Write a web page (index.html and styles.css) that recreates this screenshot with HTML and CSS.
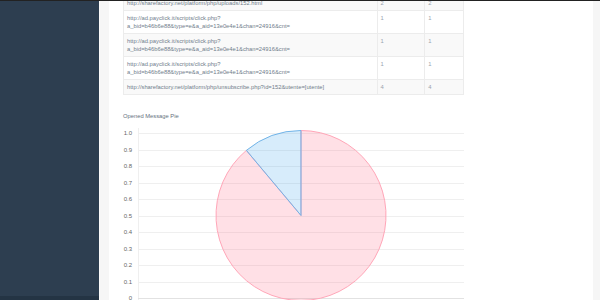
FILE: index.html
```html
<!DOCTYPE html>
<html>
<head>
<meta charset="utf-8">
<link rel="stylesheet" href="styles.css">
</head>
<body>
<div class="topbar"></div>
<div class="layout">
  <aside class="sidebar">
    <div class="sidebar-fill"></div>
    <div class="sidebar-foot"></div>
  </aside>
  <main class="main">
    <div class="panel">
      <table class="links">
        <colgroup><col class="c1"><col class="c2"><col class="c3"></colgroup>
        <tr><td>http://sharefactory.net/platform/php/uploads/152.html</td><td>2</td><td>2</td></tr>
        <tr><td>http://ad.payclick.it/scripts/click.php?<br>a_bid=b46b6e88&amp;type=e&amp;a_aid=13e0e4e1&amp;chan=24916&amp;cnt=</td><td>1</td><td>1</td></tr>
        <tr><td>http://ad.payclick.it/scripts/click.php?<br>a_bid=b46b6e88&amp;type=e&amp;a_aid=13e0e4e1&amp;chan=24916&amp;cnt=</td><td>1</td><td>1</td></tr>
        <tr><td>http://ad.payclick.it/scripts/click.php?<br>a_bid=b46b6e88&amp;type=e&amp;a_aid=13e0e4e1&amp;chan=24916&amp;cnt=</td><td>1</td><td>1</td></tr>
        <tr><td>http://sharefactory.net/platform/php/unsubscribe.php?id=152&amp;utente=[utente]</td><td>4</td><td>4</td></tr>
      </table>
      <div class="chart-title">Opened Message Pie</div>
      <svg class="chart" width="341" height="172" viewBox="0 0 341 172">
        <g class="grid">
          <line x1="15" y1="5.5" x2="341" y2="5.5"/>
          <line x1="15" y1="22.5" x2="341" y2="22.5"/>
          <line x1="15" y1="38.5" x2="341" y2="38.5"/>
          <line x1="15" y1="55.5" x2="341" y2="55.5"/>
          <line x1="15" y1="71.5" x2="341" y2="71.5"/>
          <line x1="15" y1="88.5" x2="341" y2="88.5"/>
          <line x1="15" y1="104.5" x2="341" y2="104.5"/>
          <line x1="15" y1="121.5" x2="341" y2="121.5"/>
          <line x1="15" y1="137.5" x2="341" y2="137.5"/>
          <line x1="15" y1="154.5" x2="341" y2="154.5"/>
          <line x1="15.5" y1="0" x2="15.5" y2="172"/>
        </g>
        <line class="axis" x1="15" y1="170.5" x2="341" y2="170.5"/>
        <g class="ticks">
          <text x="9" y="5.5">1.0</text>
          <text x="9" y="22">0.9</text>
          <text x="9" y="38.5">0.8</text>
          <text x="9" y="55">0.7</text>
          <text x="9" y="71.5">0.6</text>
          <text x="9" y="88">0.5</text>
          <text x="9" y="104.5">0.4</text>
          <text x="9" y="121">0.3</text>
          <text x="9" y="137.5">0.2</text>
          <text x="9" y="154">0.1</text>
          <text x="9" y="170.5">0</text>
        </g>
        <path class="slice-pink" d="M178,87.5 L178,2.5 A85,85 0 1 1 123.36,22.39 Z"/>
        <path class="slice-blue" d="M178,87.5 L123.36,22.39 A85,85 0 0 1 178,2.5 Z"/>
      </svg>
    </div>
  </main>
</div>
</body>
</html>
```
FILE: styles.css
```css
html, body {
  margin: 0;
  padding: 0;
  width: 600px;
  height: 300px;
  overflow: hidden;
  background: #ffffff;
  font-family: "Liberation Sans", Arial, sans-serif;
}
.topbar {
  height: 1px;
  background: #222222;
}
.layout {
  display: flex;
  height: 299px;
}
.sidebar {
  width: 99px;
  display: flex;
  flex-direction: column;
  background: #2d3e50;
}
.sidebar-fill {
  flex: 1;
}
.sidebar-foot {
  height: 4px;
  background: #243444;
}
.main {
  flex: 1;
  background: #f6f6f6;
  padding: 0 7px 0 9px;
  border-left: 1px solid #fbfbfb;
  overflow: hidden;
}
.panel {
  background: #ffffff;
  height: 100%;
  padding-left: 14px;
  overflow: hidden;
}
.links {
  border-collapse: collapse;
  width: 341px;
  margin-top: -6px;
  font-size: 5.8px;
  line-height: 8px;
  color: #707d8b;
}
.links .c1 { width: 254px; }
.links .c2 { width: 48px; }
.links .c3 { width: 39px; }
.links td {
  border: 1px solid #ececec;
  padding: 3px 3px 3px 3px;
  vertical-align: top;
  white-space: nowrap;
}
.links td + td {
  color: #9aa3ad;
}
.links tr:nth-child(odd) td {
  background: #f9f9f9;
}
.chart-title {
  margin-top: 17px;
  font-size: 5.8px;
  line-height: 8px;
  color: #66717e;
}
.chart {
  display: block;
  margin-top: 8px;
}
.grid line {
  stroke: #efefef;
  stroke-width: 1;
}
.axis {
  stroke: #e2e2e2;
  stroke-width: 1;
}
.ticks text {
  font-family: "Liberation Sans", Arial, sans-serif;
  font-size: 6px;
  fill: #666666;
  text-anchor: end;
  dominant-baseline: middle;
}
.slice-pink {
  fill: rgba(255, 99, 132, 0.2);
  stroke: #ffa6b8;
  stroke-width: 1;
}
.slice-blue {
  fill: rgba(54, 162, 235, 0.2);
  stroke: #72b4e8;
  stroke-width: 1;
}
```
